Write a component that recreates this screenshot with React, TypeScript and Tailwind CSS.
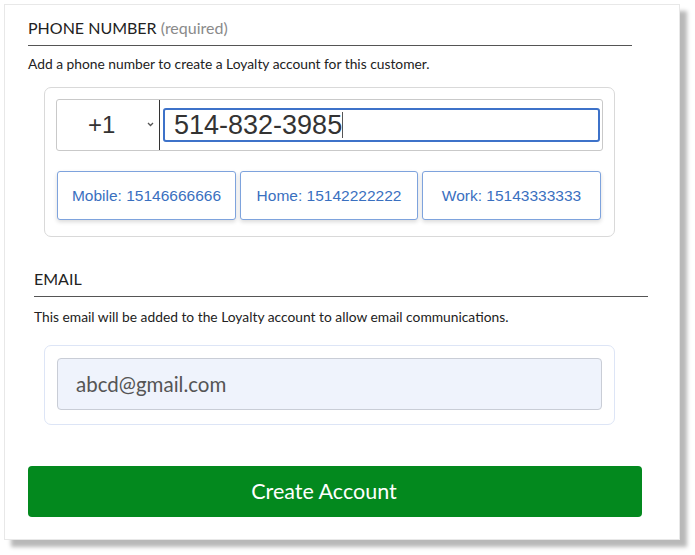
import React from "react";

export default function App() {
  const buttons = [
    { t: "Mobile: 15146666666", w: "w-[179px]" },
    { t: "Home: 15142222222", w: "w-[178px]" },
    { t: "Work: 15143333333", w: "w-[179px]" },
  ];
  return (
    <div className="w-[695px] h-[555px] bg-white p-[4px] font-['Lato','Noto_Sans',sans-serif]">
      <div className="w-[676px] h-[536px] bg-white border border-[#e8e8e8] shadow-[7px_7px_4px_rgba(0,0,0,0.28)] flex flex-col">
        {/* PHONE section */}
        <div className="ml-[23px] mt-[13px] w-[604px] pb-[7px] border-b border-[#555] text-[16px] leading-[20px] text-[#222]">
          PHONE NUMBER <span className="text-[#8a8a8a]">(required)</span>
        </div>
        <div className="ml-[23px] mt-[9px] text-[13.8px] leading-[18px] text-[#222]">
          Add a phone number to create a Loyalty account for this customer.
        </div>
        <div className="ml-[39px] mt-[14px] w-[571px] h-[150px] shrink-0 border border-[#d9d9d9] rounded-[7px] pt-[11px] px-[11px] flex flex-col">
          <div className="h-[52px] border border-[#c9c9c9] rounded-[3px] flex items-center bg-white">
            <div className="w-[102px] h-full flex items-center relative">
              <span className="ml-[31px] text-[24px] text-[#333] font-['Liberation_Sans',Arial,sans-serif]">+1</span>
              <svg className="absolute left-[90px] top-[22px]" width="7" height="5" viewBox="0 0 7 5">
                <polyline points="1,1 3.5,3.5 6,1" fill="none" stroke="#555" strokeWidth="1.3" />
              </svg>
            </div>
            <div className="w-px h-full bg-[#333]" />
            <div className="ml-[3px] w-[437px] h-[34px] border-2 border-[#3d72c9] rounded-[3px] flex items-center pl-[9px]">
              <span className="text-[27px] leading-[30px] text-[#333] font-['Liberation_Sans',Arial,sans-serif]">514-832-3985</span>
              <span className="w-px h-[26px] bg-[#555]" />
            </div>
          </div>
          <div className="mt-[20px] ml-[1px] flex gap-[4px] font-['Liberation_Sans',Arial,sans-serif]">
            {buttons.map((b) => (
              <div
                key={b.t}
                className={`${b.w} h-[49px] shrink-0 border border-[#7ea3dd] rounded-[3px] bg-white shadow-[0_2px_4px_rgba(0,0,0,0.15)] flex items-center justify-center text-[15.5px] text-[#3a70c0]`}
              >
                {b.t}
              </div>
            ))}
          </div>
        </div>

        {/* EMAIL section */}
        <div className="ml-[29px] mt-[32px] w-[614px] pb-[7px] border-b border-[#555] text-[16px] leading-[20px] text-[#222]">
          EMAIL
        </div>
        <div className="ml-[29px] mt-[11px] text-[13.8px] leading-[18px] text-[#222]">
          This email will be added to the Loyalty account to allow email communications.
        </div>
        <div className="ml-[39px] mt-[19px] w-[571px] h-[80px] shrink-0 border border-[#dde5f6] rounded-[7px] p-[12px]">
          <div className="w-[545px] h-[52px] bg-[#eff3fc] border border-[#c9cdd6] rounded-[4px] flex items-center pl-[18px] text-[20.5px] text-[#555]">
            abcd@gmail.com
          </div>
        </div>

        <div className="ml-[23px] mt-[41px] w-[614px] h-[51px] shrink-0 bg-[#03891e] rounded-[4px] flex items-center justify-center pr-[22px] text-white text-[21.5px]">
          Create Account
        </div>
      </div>
    </div>
  );
}
